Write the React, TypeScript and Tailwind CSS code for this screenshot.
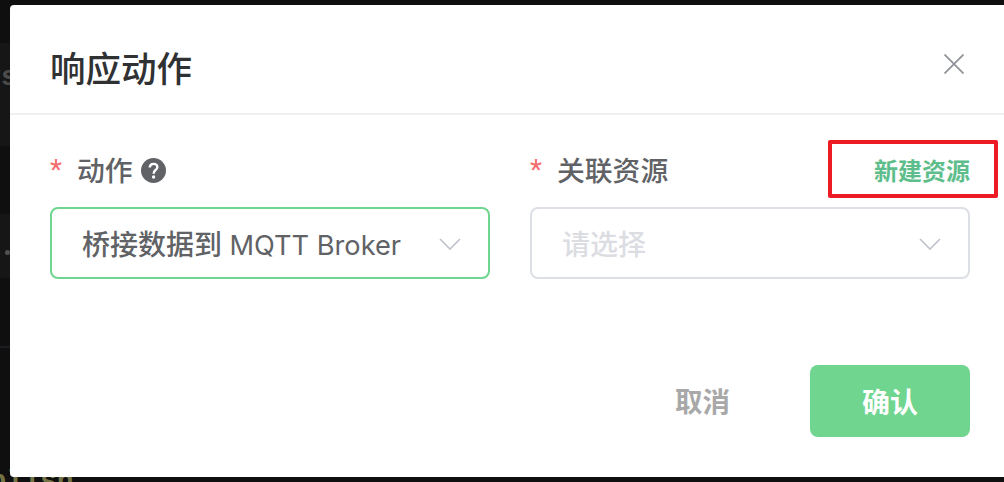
import type { ReactNode } from "react";

function Chevron() {
  return (
    <svg className="mt-[1px] h-[14px] w-[22px] shrink-0" viewBox="0 0 22 14" fill="none" stroke="#c0c4cc" strokeWidth="1.7">
      <path d="M1 2 11 12 21 2" />
    </svg>
  );
}

function Field({ label, children }: { label: ReactNode; children: ReactNode }) {
  return (
    <div className="w-[440px] shrink-0">
      <div className="mb-[9px] flex h-[58px] items-center text-[27.8px] font-medium text-[#606266]">
        <span className="mt-[2px] mr-[15px] w-[12px] font-['Roboto'] font-normal text-[#f56c6c]">*</span>
        {label}
      </div>
      {children}
    </div>
  );
}

export default function App() {
  return (
    <div className="relative h-[482px] w-[1004px] overflow-hidden bg-[#0f0f0f] font-['Inter','Noto_Sans_CJK_SC',sans-serif]">
      <div className="absolute top-[43px] left-0 h-[103px] w-full bg-[#161616]" />
      <div className="absolute top-[214px] left-0 h-[64px] w-full bg-[#161616]" />
      <div className="absolute top-[346px] left-0 h-[2px] w-full bg-[#1c1b20]" />
      <span className="absolute top-[62px] left-[-16px] font-['Liberation_Mono',monospace] text-[28px] leading-[32px] font-bold text-[#4b4b4b]">ys</span>
      <div className="absolute top-[250px] left-[5px] size-[5px] rounded-full bg-[#505050]" />
      <span className="absolute top-[466px] left-[-44px] font-['Liberation_Mono',monospace] text-[28px] leading-[32px] font-bold text-[#747447]">publish</span>

      <main className="absolute top-[5px] left-[10px] h-[472px] w-[1000px] rounded-[4px] bg-white">
        <header className="flex h-[110px] items-center justify-between border-b-2 border-[#f0f0f0] pt-[20px] pr-[46px] pl-[40px]">
          <h1 className="mt-[2px] text-[35.5px] leading-[44px] font-medium text-[#303133]">响应动作</h1>
          <button aria-label="关闭" className="mb-[10px] flex size-[20px] items-center justify-center">
            <svg className="size-[20px]" viewBox="0 0 20 20" stroke="#909399" strokeWidth="1.8">
              <path d="M.5.5 19.5 19.5M19.5.5.5 19.5" />
            </svg>
          </button>
        </header>

        <section className="flex gap-[40px] px-[40px] pt-[25px]">
          <Field
            label={
              <>
                <span className="mt-[5px]">动作</span>
                <svg className="mt-[2px] ml-[8px] size-[25px]" viewBox="0 0 24 24">
                  <circle cx="12" cy="12" r="12" fill="#606266" />
                  <path d="M8.4 9.1C8.5 6.9 9.9 5.6 12 5.6s3.7 1.3 3.7 3.3c0 1.4-.8 2.1-1.9 2.9-1.1.8-1.6 1.4-1.6 3.2" fill="none" stroke="#fff" strokeWidth="2.3" />
                  <circle cx="12.1" cy="18.2" r="1.6" fill="#fff" />
                </svg>
              </>
            }
          >
            <div className="flex h-[72px] items-center justify-between rounded-[8px] border-2 border-[#6fd58f] pr-[27px] pl-[30px] text-[28px] text-[#606266]">
              <span className="mt-[4px] text-[28px] font-medium whitespace-nowrap">
                桥接数据到 <span className="text-[27.2px] font-normal">MQTT Broker</span>
              </span>
              <Chevron />
            </div>
          </Field>

          <Field
            label={
              <>
                <span className="mt-[5px]">关联资源</span>
                <a className="-mr-[28px] ml-auto flex h-[58px] w-[170px] items-center justify-end rounded-[2px] border-4 border-[#ed1c24] pt-[6px] pr-[24px] text-[24px] font-bold text-[#5dbe8c]">
                  新建资源
                </a>
              </>
            }
          >
            <div className="flex h-[72px] items-center justify-between rounded-[8px] border-2 border-[#dcdfe6] pr-[27px] pl-[30px] text-[28px] text-[#dcdde3]">
              <span className="mt-[4px] font-medium">请选择</span>
              <Chevron />
            </div>
          </Field>
        </section>

        <footer className="mt-[86px] flex items-center justify-end gap-[80px] pr-[40px]">
          <button className="pt-[3px] text-[27.5px] font-bold text-[#a8a8a8]">取消</button>
          <button className="h-[72px] w-[160px] rounded-[8px] bg-[#6fd58f] pt-[3px] text-[28px] font-bold text-white">确认</button>
        </footer>
      </main>
    </div>
  );
}
